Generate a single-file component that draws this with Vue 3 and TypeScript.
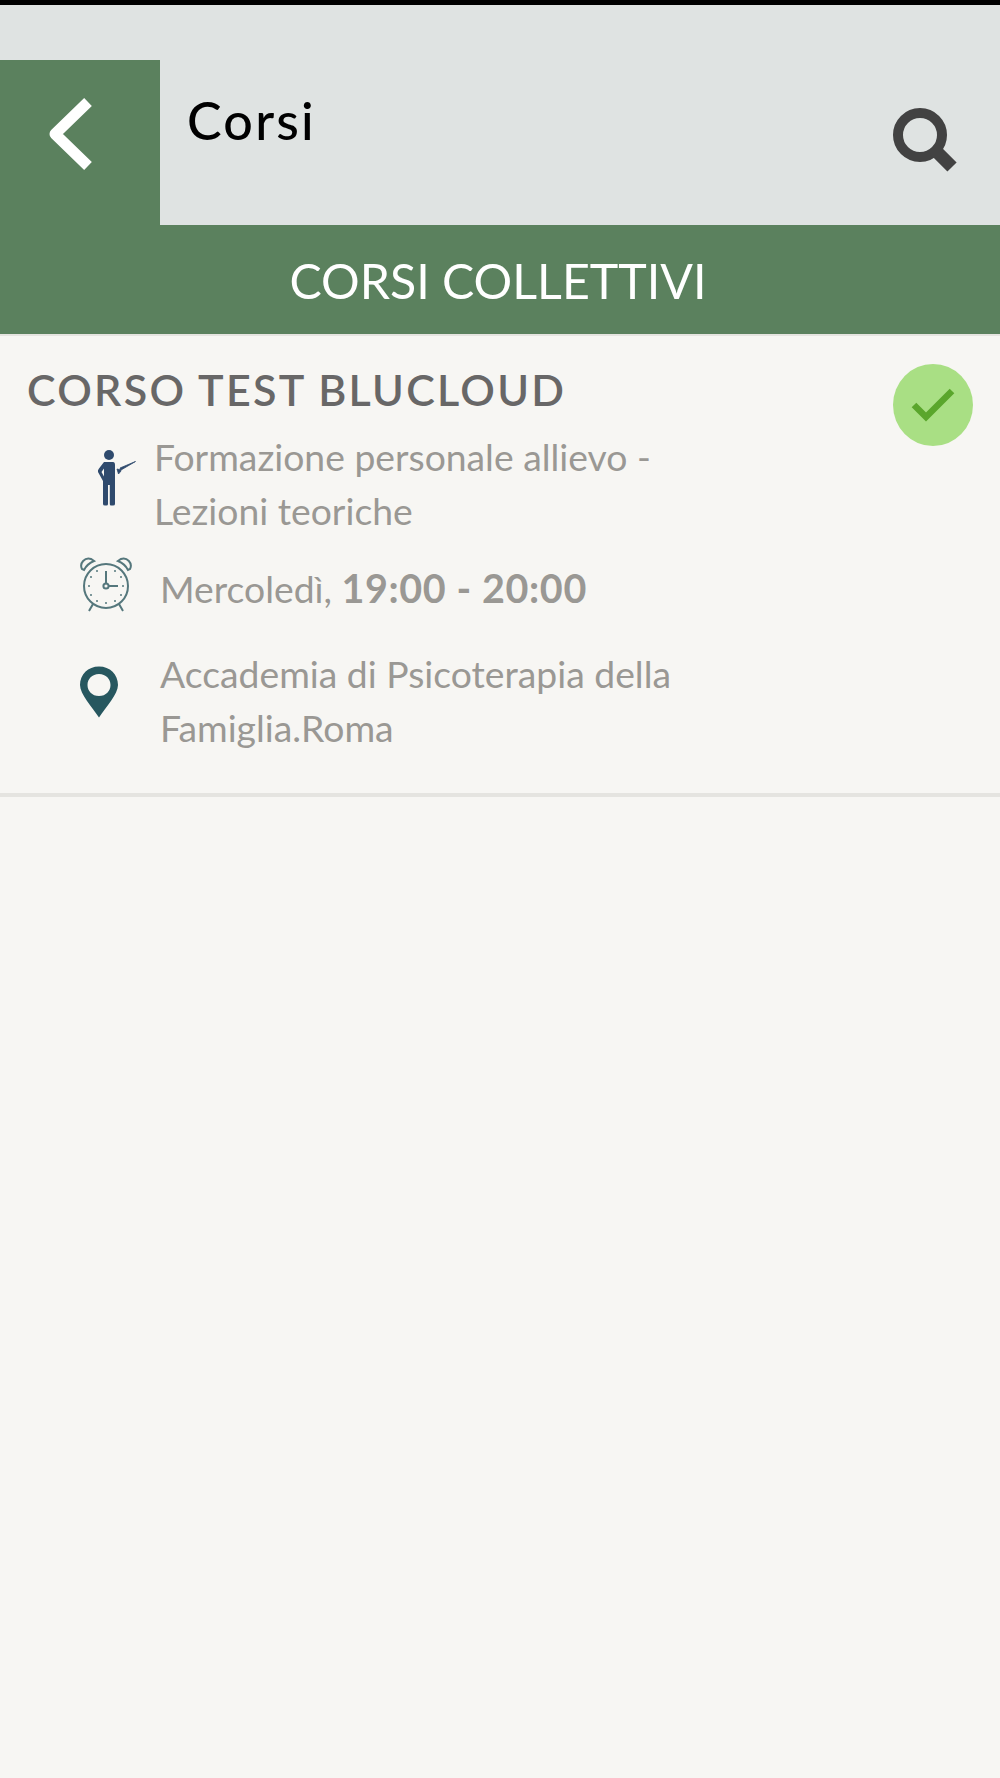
<template>
  <div class="page">
    <div class="status-bar"></div>
    <header class="top-bar">
      <button class="back-btn" aria-label="Indietro">
        <svg width="46" height="78" viewBox="0 0 46 78">
          <path d="M40 6 L7 38 L40 70" fill="none" stroke="#fff" stroke-width="11" stroke-linejoin="round" />
        </svg>
      </button>
      <h1 class="title">Corsi</h1>
      <svg class="search" width="66" height="66" viewBox="0 0 66 66">
        <circle cx="28" cy="27" r="22" fill="none" stroke="#424242" stroke-width="10" />
        <path d="M43 42 L60 59" stroke="#424242" stroke-width="13" />
      </svg>
    </header>
    <div class="band">CORSI COLLETTIVI</div>

    <section class="card">
      <div class="card-info">
        <h2 class="course-name">{{ course.name }}</h2>

        <div class="row row-type">
          <svg class="icon-person" width="40" height="56" viewBox="0 0 40 56">
            <circle cx="12" cy="5" r="5" fill="#2f4a6d" />
            <path d="M7 12 H16 Q18 12 18 15 V54 Q18 55.500 16 55.500 H14 Q12.800 55.500 12.800 54 V35 H11 V54 Q11 55.500 9.500 55.500 H8 Q6 55.500 6 54 V31 L1 22 Q0.500 20 2 18.500 Z M7 18.500 L4.500 22 L7 26.500 Z" fill="#2f4a6d" fill-rule="evenodd" />
            <path d="M20 19 L24 20 L38.500 11.500 L23 18 L24 21 L21.500 24 Z" fill="#2f4a6d" stroke="#2f4a6d" stroke-width="0.800" />
          </svg>
          <div class="text">Formazione personale allievo -<br />Lezioni teoriche</div>
        </div>

        <div class="row row-time">
          <svg class="icon-clock" width="54" height="56" viewBox="0 0 54 56">
            <g fill="none" stroke="#55777c" stroke-width="2">
              <circle cx="27" cy="29" r="22" />
              <path d="M3 12 C0 6 6 0 12 2 L15 4 C10 6 7 9 5 13 Z" />
              <path d="M51 12 C54 6 48 0 42 2 L39 4 C44 6 47 9 49 13 Z" />
              <path d="M14 47 L10 54 M40 47 L44 54" />
              <circle cx="27" cy="29" r="2.600" />
              <path d="M27 14 V26 M30 29 H39" />
            </g>
            <g fill="#55777c">
              <circle cx="36" cy="14" r="1" />
              <circle cx="42" cy="20" r="1" />
              <circle cx="44" cy="29" r="1" />
              <circle cx="42" cy="38" r="1" />
              <circle cx="36" cy="44" r="1" />
              <circle cx="27" cy="46" r="1" />
              <circle cx="18" cy="44" r="1" />
              <circle cx="12" cy="38" r="1" />
              <circle cx="10" cy="29" r="1" />
              <circle cx="12" cy="20" r="1" />
              <circle cx="18" cy="14" r="1" />
            </g>
          </svg>
          <div class="text">Mercoledì, <strong>19:00 - 20:00</strong></div>
        </div>

        <div class="row row-place">
          <svg class="icon-pin" width="40" height="52" viewBox="0 0 40 52">
            <path d="M20 0.500 C9 0.500 1 8.500 1 19 C1 28 13 41 20 51.500 C27 41 39 28 39 19 C39 8.500 31 0.500 20 0.500 Z M20 8 C27 8 31.500 13 31.500 19 C31.500 25 27 30 20 30 C13 30 8.500 25 8.500 19 C8.500 13 13 8 20 8 Z" fill="#27575f" fill-rule="evenodd" />
          </svg>
          <div class="text">Accademia di Psicoterapia della<br />Famiglia.Roma</div>
        </div>
      </div>

      <div class="done">
        <svg width="44" height="36" viewBox="0 0 44 36">
          <path d="M3 18 L15 30 L41 4" fill="none" stroke="#5aa62c" stroke-width="6.500" />
        </svg>
      </div>
    </section>
  </div>
</template>

<script setup lang="ts">
const course = {
  name: 'CORSO TEST BLUCLOUD'
};
</script>

<style>
html, body {
  margin: 0;
  background: #f7f6f3;
}
</style>

<style scoped>
.page {
  display: flex;
  flex-direction: column;
  width: 1000px;
  min-height: 1778px;
  background-color: #f7f6f3;
  font-family: Lato, "Open Sans", sans-serif;
}

.status-bar {
  height: 5px;
  background-color: #000;
}

.top-bar {
  display: flex;
  height: 220px;
  padding-top: 55px;
  padding-right: 42px;
  box-sizing: border-box;
  background-color: #dfe3e2;
}

.back-btn {
  display: flex;
  justify-content: center;
  width: 160px;
  padding: 36px 19px 0 0;
  border: none;
  background-color: #5b815e;
}

.title {
  flex: 1;
  margin: 0;
  padding: 25px 0 0 27px;
  font-size: 52px;
  line-height: 70px;
  font-weight: 500;
  letter-spacing: 2.200px;
  color: #000;
}

.search {
  margin-top: 48px;
}

.band {
  height: 109px;
  padding-right: 4px;
  background-color: #5b815e;
  color: #fff;
  font-size: 48.300px;
  line-height: 110px;
  text-align: center;
}

.card {
  display: flex;
  justify-content: space-between;
  align-items: flex-start;
  padding: 28px 27px 38px 27px;
  border-top: 2px solid #e5e4e0;
  border-bottom: 4px solid #e5e4e0;
}

.course-name {
  margin: 0;
  font-size: 43px;
  line-height: 52px;
  font-weight: 600;
  letter-spacing: 2.280px;
  color: #686767;
}

.row {
  display: flex;
  align-items: center;
  color: #9a9894;
}

.text {
  font-size: 37.300px;
  line-height: 54px;
}

.text strong {
  font-size: 39.500px;
  font-weight: 700;
  letter-spacing: 0.600px;
}

.row-type {
  margin-top: 14px;
  padding-left: 70px;
}

.icon-person {
  margin-right: 17px;
  margin-bottom: 12px;
}

.row-time {
  margin-top: 19px;
  padding-left: 52px;
}

.icon-clock {
  margin-right: 27px;
  margin-bottom: 6px;
}

.row-place {
  margin-top: 28px;
  padding-left: 52px;
}

.icon-pin {
  margin-right: 41px;
  margin-top: -18px;
}

.done {
  display: flex;
  justify-content: center;
  align-items: center;
  width: 80px;
  height: 82px;
  border-radius: 50%;
  background-color: #a9df84;
}
</style>
